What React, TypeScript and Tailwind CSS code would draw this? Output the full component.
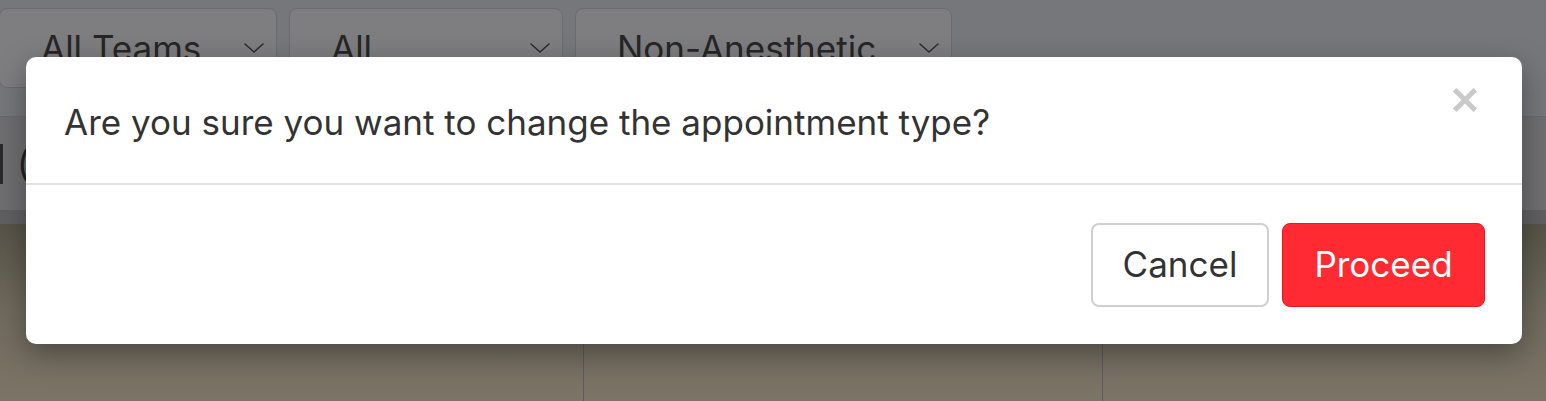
import React from 'react';

const filters = [
  { label: 'All Teams', width: 'w-[278px]' },
  { label: 'All', width: 'w-[274px]' },
  { label: 'Non-Anesthetic', width: 'w-[377px]' },
];

const Chevron = () => (
  <svg className="w-[24px] h-[24px] text-[#2b2b2b]" viewBox="0 0 24 24" fill="none" stroke="currentColor" strokeWidth={1.5}>
    <path d="M3 8l9 8 9-8" strokeLinecap="round" strokeLinejoin="round" />
  </svg>
);

const App: React.FC = () => {
  return (
    <div className="relative w-[1546px] h-[401px] overflow-hidden bg-[#7b7467] font-['Inter','Liberation_Sans',sans-serif]">
      {/* page behind the dialog, already dimmed */}
      <div className="flex flex-col h-full">
        <div className="h-[117px] bg-[#76777b] flex gap-3 pt-2 border-b border-[#6a6a6e]">
          {filters.map((f) => (
            <div
              key={f.label}
              className={`${f.width} h-[80px] rounded-lg border border-[#6c6c70] bg-[#7e7e80] flex items-center justify-between pl-[41px] pr-[10px] first:-ml-px`}
            >
              <span className="text-[35px] text-[#262626]">{f.label}</span>
              <Chevron />
            </div>
          ))}
        </div>
        <div className="h-[95px] bg-[#6f6f72] flex items-center border-b-2 border-[#5f5f62]">
          <span className="text-[35px] text-[#222] flex items-center gap-[14px]">
            <span className="w-[3px] h-[40px] bg-[#2a2a2a]" />(
          </span>
        </div>
        <div className="h-[12px] bg-[#606063]" />
        <div className="flex-1 grid grid-cols-[584px_519px_1fr] bg-gradient-to-b from-[#575348] via-[#716b5e] to-[#7b7467]">
          <div className="border-r border-[#5d5c5c]" />
          <div className="border-r border-[#5d5c5c]" />
          <div />
        </div>
      </div>

      {/* dialog */}
      <div className="absolute left-[26px] top-[57px] w-[1496px] h-[287px] bg-white rounded-[10px] shadow-[0_10px_30px_rgba(0,0,0,0.35)] flex flex-col">
        <div className="relative h-[126px] flex items-center px-[38px] pt-1">
          <p className="text-[35px] text-[#333333]">Are you sure you want to change the appointment type?</p>
          <button className="absolute right-[44px] top-[30px] w-[26px] h-[26px] flex items-center justify-center text-[#c9c9c9]">
            <svg viewBox="0 0 24 24" className="w-[26px] h-[26px]" fill="none" stroke="currentColor" strokeWidth={4.6}>
              <path d="M2.5 2.5l19 19M21.5 2.5l-19 19" />
            </svg>
          </button>
        </div>
        <div className="h-[2px] bg-[#e2e2e2]" />
        <div className="flex-1 flex items-center justify-end gap-[13px] px-[37px]">
          <button className="w-[178px] h-[84px] rounded-lg border-2 border-[#cfcfcf] bg-white text-[35px] text-[#333333]">
            Cancel
          </button>
          <button className="w-[203px] h-[84px] rounded-lg border border-[#f0151f] bg-[#ff2a32] text-[35px] text-white">
            Proceed
          </button>
        </div>
      </div>
    </div>
  );
};

export default App;
